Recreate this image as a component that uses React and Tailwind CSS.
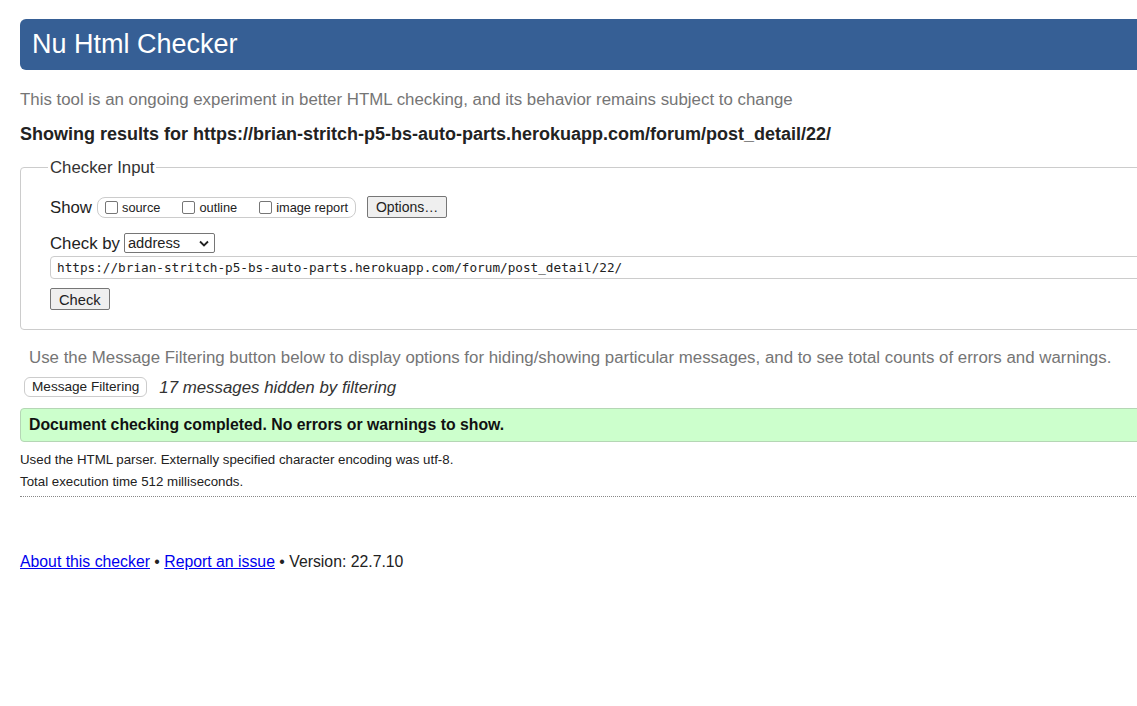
import React from "react";

const Checkbox = ({ label }) => (
  <label className="flex items-center gap-[4px]">
    <span className="inline-block w-[13px] h-[13px] border border-[#767676] rounded-[2px] bg-white" />
    <span className="text-[12.8px] text-[#222]">{label}</span>
  </label>
);

const App = () => {
  return (
    <div className="w-[1137px] h-[706px] overflow-hidden bg-white font-['Liberation_Sans',Arial,sans-serif] text-[#222]">
      <div className="w-[1180px] pl-[20px] pt-[19px]">
        <div className="h-[51px] bg-[#365f95] rounded-l-[6px] flex items-center pl-[12px]">
          <h1 className="text-[27px] text-white leading-none">Nu Html Checker</h1>
        </div>

        <p className="mt-[20px] text-[16.85px] text-[#757575] leading-[20px]">
          This tool is an ongoing experiment in better HTML checking, and its behavior remains subject to change
        </p>
        <p className="mt-[14px] text-[18px] font-bold leading-[20px] text-[#222]">
          Showing results for https://brian-stritch-p5-bs-auto-parts.herokuapp.com/forum/post_detail/22/
        </p>

        <fieldset className="mt-[11px] border border-[#cccccc] rounded-l-[4px] pl-[29px] pr-0 pt-[15px] pb-[17px]">
          <legend className="ml-[-2px] px-[2px] text-[16.8px] text-[#333]">Checker Input</legend>

          <div className="flex items-center h-[24px]">
            <span className="text-[16.8px] mr-[5px]">Show</span>
            <div className="flex items-center gap-[22px] border border-[#cccccc] rounded-[8px] h-[21px] pl-[7px] pr-[7px]">
              <Checkbox label="source" />
              <Checkbox label="outline" />
              <Checkbox label="image report" />
            </div>
            <button className="ml-[11px] h-[22px] px-[8px] text-[14px] bg-[#efefef] border border-[#767676] rounded-[2px] text-[#222]">
              Options…
            </button>
          </div>

          <div className="flex items-center mt-[14px] h-[20px]">
            <span className="text-[16.8px] mr-[4px]">Check by</span>
            <div className="flex items-center justify-between w-[91px] h-[20px] border border-[#767676] rounded-[2px] pl-[3px] pr-[5px]">
              <span className="text-[14.7px] leading-none">address</span>
              <svg width="10" height="7" viewBox="0 0 10 7">
                <path d="M1 1.5 L5 5.5 L9 1.5" stroke="#222" strokeWidth="1.8" fill="none" />
              </svg>
            </div>
          </div>

          <div className="mt-[3px] h-[23px] border border-[#cccccc] rounded-l-[4px] flex items-center pl-[6px]">
            <span className="font-['DejaVu_Sans_Mono',monospace] text-[12.7px] text-[#222]">
              https://brian-stritch-p5-bs-auto-parts.herokuapp.com/forum/post_detail/22/
            </span>
          </div>

          <button className="mt-[9px] h-[22px] px-[8px] text-[14.7px] bg-[#efefef] border border-[#767676] rounded-[2px] text-[#222]">
            Check
          </button>
        </fieldset>

        <p className="mt-[18px] ml-[9px] text-[16.85px] text-[#757575] leading-[20px]">
          Use the Message Filtering button below to display options for hiding/showing particular messages, and to see total counts of errors and warnings.
        </p>

        <div className="flex items-center mt-[9px] ml-[4px] h-[20px]">
          <button className="h-[20px] px-[7px] text-[13.6px] bg-white border border-[#cccccc] rounded-[6px] text-[#222] leading-none">
            Message Filtering
          </button>
          <span className="ml-[12px] text-[16.85px] italic text-[#333]">17 messages hidden by filtering</span>
        </div>

        <div className="mt-[11px] h-[34px] bg-[#ccffcc] border border-[#b5d6b5] rounded-l-[4px] flex items-center pl-[8px]">
          <span className="text-[15.8px] font-bold text-[#111]">Document checking completed. No errors or warnings to show.</span>
        </div>

        <p className="mt-[10px] text-[13.3px] leading-[16px] text-[#222]">
          Used the HTML parser. Externally specified character encoding was utf-8.
        </p>
        <p className="mt-[6px] text-[13.3px] leading-[16px] text-[#222]">Total execution time 512 milliseconds.</p>

        <div className="mt-[6px] border-t border-dotted border-[#888]" />

        <p className="mt-[55px] text-[15.8px] leading-[20px] text-[#222]">
          <a href="#" className="text-[#0000ee] underline">About this checker</a>
          {" • "}
          <a href="#" className="text-[#0000ee] underline">Report an issue</a>
          {" • Version: 22.7.10"}
        </p>
      </div>
    </div>
  );
};

export default App;
